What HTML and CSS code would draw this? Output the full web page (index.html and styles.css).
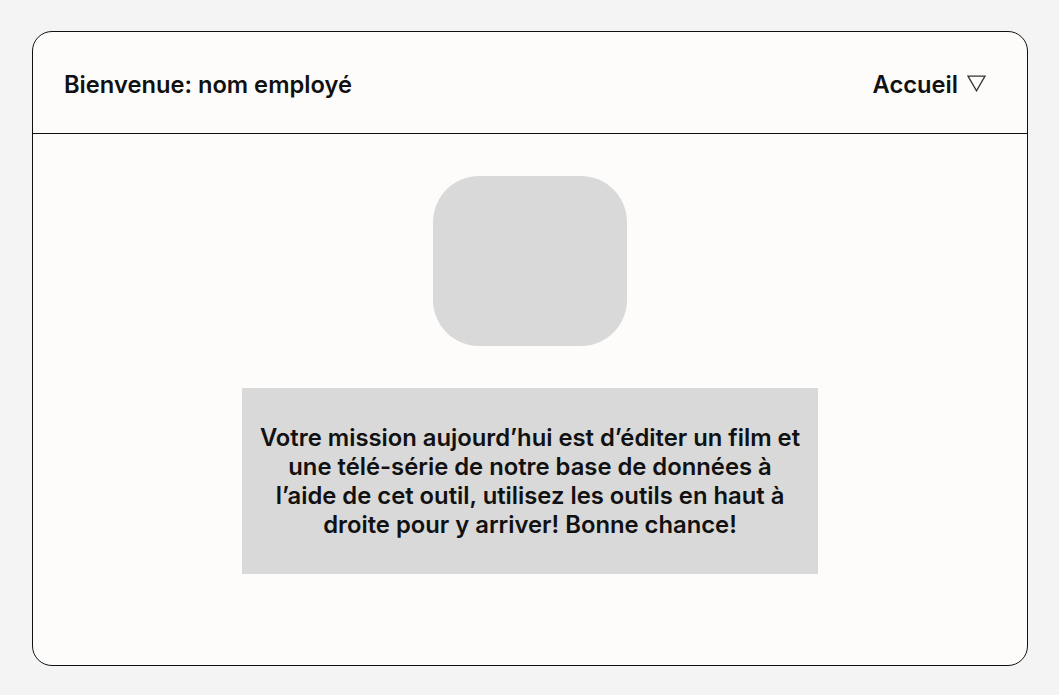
FILE: index.html
```html
<!DOCTYPE html>
<html lang="fr">
<head>
<meta charset="utf-8">
<link rel="stylesheet" href="styles.css">
</head>
<body>
<div class="card">
  <header class="header">
    <div class="welcome">Bienvenue: nom employé</div>
    <div class="nav">Accueil
      <svg class="tri" width="19" height="17" viewBox="0 0 19 17"><polygon points="1,1.2 18,1.2 9.5,15.8" fill="none" stroke="#333" stroke-width="1.3" stroke-linejoin="miter"/></svg>
    </div>
  </header>
  <main class="content">
    <div class="avatar"></div>
    <div class="mission">
      <p>Votre mission aujourd’hui est d’éditer un film et une télé-série de notre base de données à l’aide de cet outil, utilisez les outils en haut à droite pour y arriver! Bonne chance!</p>
    </div>
  </main>
</div>
</body>
</html>
```
FILE: styles.css
```css
html, body {
  margin: 0;
  padding: 0;
  background: #f4f4f5;
}
body {
  padding: 31px 31px 29px 32px;
  font-family: Inter, "Liberation Sans", sans-serif;
  color: #111;
}
.card {
  box-sizing: border-box;
  width: 996px;
  height: 635px;
  border: 1px solid #111;
  border-radius: 20px;
  background: #fdfcfb;
  display: flex;
  flex-direction: column;
}
.header {
  height: 102px;
  box-sizing: border-box;
  border-bottom: 1px solid #111;
  display: flex;
  align-items: center;
  justify-content: space-between;
  padding: 4px 41px 0 31px;
  font-size: 23.7px;
  font-weight: 600;
}
.nav {
  display: flex;
  align-items: center;
  gap: 9px;
}
.tri {
  display: block;
  margin-top: -2px;
}
.content {
  display: flex;
  flex-direction: column;
  align-items: center;
  padding-top: 42px;
  gap: 42px;
}
.avatar {
  width: 194px;
  height: 170px;
  border-radius: 46px;
  background: #d9d9d9;
}
.mission {
  width: 576px;
  height: 186px;
  background: #d9d9d9;
  display: flex;
  align-items: center;
  justify-content: center;
  box-sizing: border-box;
}
.mission p {
  margin: 0;
  max-width: 545px;
  text-align: center;
  font-size: 23.8px;
  line-height: 29px;
  font-weight: 600;
}
```
